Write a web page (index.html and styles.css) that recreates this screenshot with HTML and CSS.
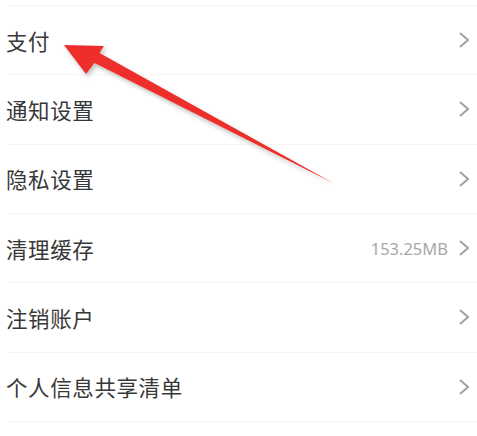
FILE: index.html
```html
<!DOCTYPE html>
<html lang="zh-CN">
<head>
  <meta charset="UTF-8">
  <title>设置</title>
  <link rel="stylesheet" href="styles.css">
</head>
<body>

  <div class="page">
    <ul class="menu">
      <li class="item">
        <span class="label">支付</span>
        <svg class="chev" viewBox="0 0 12 18"><path d="M2 2 L10 9 L2 16"/></svg>
      </li>
      <li class="item">
        <span class="label">通知设置</span>
        <svg class="chev" viewBox="0 0 12 18"><path d="M2 2 L10 9 L2 16"/></svg>
      </li>
      <li class="item">
        <span class="label">隐私设置</span>
        <svg class="chev" viewBox="0 0 12 18"><path d="M2 2 L10 9 L2 16"/></svg>
      </li>
      <li class="item">
        <span class="label">清理缓存</span>
        <span class="value">153.25MB</span>
        <svg class="chev" viewBox="0 0 12 18"><path d="M2 2 L10 9 L2 16"/></svg>
      </li>
      <li class="item">
        <span class="label">注销账户</span>
        <svg class="chev" viewBox="0 0 12 18"><path d="M2 2 L10 9 L2 16"/></svg>
      </li>
      <li class="item">
        <span class="label">个人信息共享清单</span>
        <svg class="chev" viewBox="0 0 12 18"><path d="M2 2 L10 9 L2 16"/></svg>
      </li>
    </ul>

    <!-- annotation arrow pointing at 支付 -->
    <svg class="arrow" width="477" height="436" viewBox="0 0 477 436">
      <defs>
        <filter id="shadow" x="-10%" y="-10%" width="130%" height="140%">
          <feDropShadow dx="2" dy="3" stdDeviation="2" flood-color="#777" flood-opacity="0.45"/>
        </filter>
      </defs>
      <polygon points="64,45 104,46 99.5,53 333,183 94.5,63 86,74" fill="#ee2d2b" filter="url(#shadow)"/>
    </svg>
  </div>

</body>
</html>
```

FILE: styles.css
```css
body {
  margin: 0;
  background: #fff;
  font-family: "Noto Sans CJK SC", "Noto Sans", sans-serif;
}

.page {
  position: relative;
  width: 477px;
  height: 436px;
  overflow: hidden;
  padding-top: 5px;
  box-sizing: border-box;
}

.menu {
  list-style: none;
  margin: 0;
  padding: 0;
  border-top: 1px solid #f6f6f6;
  margin-left: 8px;
}

.item {
  display: flex;
  align-items: center;
  height: 68.33px;
  border-bottom: 1px solid #f6f6f6;
  padding-right: 7px;
}

.label {
  flex: 1;
  margin-left: -2px;
  font-size: 21.5px;
  color: #383838;
  letter-spacing: 0.6px;
}

.value {
  font-family: "Noto Sans", sans-serif;
  font-size: 16.5px;
  color: #a8a8a8;
  margin-right: 10px;
  margin-top: 1px;
}

.chev {
  width: 12px;
  height: 18px;
  fill: none;
  stroke: #a0a0a0;
  stroke-width: 2;
}

.arrow {
  position: absolute;
  left: 0;
  top: 0;
  pointer-events: none;
}
```
